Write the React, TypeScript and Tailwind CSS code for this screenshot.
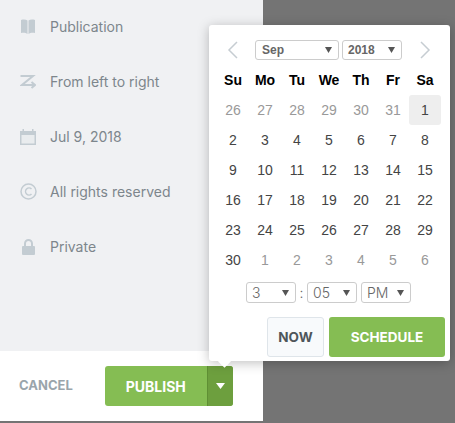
const weeks = [
  [26, 27, 28, 29, 30, 31, 1],
  [2, 3, 4, 5, 6, 7, 8],
  [9, 10, 11, 12, 13, 14, 15],
  [16, 17, 18, 19, 20, 21, 22],
  [23, 24, 25, 26, 27, 28, 29],
  [30, 1, 2, 3, 4, 5, 6],
];
const days = ["Su", "Mo", "Tu", "We", "Th", "Fr", "Sa"];

function Caret() {
  return (
    <svg width="7" height="6" viewBox="0 0 7 6" className="shrink-0">
      <path d="M0 0h7L3.500 6z" fill="#555" />
    </svg>
  );
}

function FakeSelect({ label, className }: { label: string; className: string }) {
  return (
    <div className={`flex items-center justify-between rounded-[3px] border border-[#ccc] bg-white pr-[6px] ${className}`}>
      <span>{label}</span>
      <Caret />
    </div>
  );
}

const rows = [
  {
    label: "Publication",
    icon: (
      <svg width="16" height="15" viewBox="0 0 16 15">
        <path d="M1 1c2.500-.8 5-.6 6.500.6V15C6 13.800 3.500 13.500 1 14zM15 1c-2.500-.8-5-.6-6.500.6V15c1.500-1.200 4-1.500 6.500-1z" fill="#c3ccd2" />
      </svg>
    ),
  },
  {
    label: "From left to right",
    icon: (
      <svg width="16" height="15" viewBox="0 0 16 15" fill="none" stroke="#c3ccd2" strokeWidth="2">
        <path d="M0.500 2h12.500L2 11h12.500M11.500 8l3.500 3-3.500 3" />
      </svg>
    ),
  },
  {
    label: "Jul 9, 2018",
    icon: (
      <svg width="16" height="16" viewBox="0 0 16 16">
        <path d="M0 2h2.500V0H4v2h8V0h1.500v2H16v14H0z" fill="#c3ccd2" />
        <rect x="1.500" y="6" width="13" height="8.500" fill="#e9ecee" />
      </svg>
    ),
  },
  {
    label: "All rights reserved",
    icon: (
      <svg width="17" height="17" viewBox="0 0 17 17" fill="none" stroke="#c3ccd2">
        <circle cx="8.500" cy="8.500" r="7.500" strokeWidth="1.500" />
        <path d="M11.500 6a3.500 3.500 0 1 0 0 5" strokeWidth="1.500" />
      </svg>
    ),
  },
  {
    label: "Private",
    icon: (
      <svg width="13" height="16" viewBox="0 0 13 16">
        <path d="M3 7V4.500a3.500 3.500 0 0 1 7 0V7" fill="none" stroke="#c3ccd2" strokeWidth="2" />
        <rect y="7" width="13" height="9" rx="1" fill="#c3ccd2" />
      </svg>
    ),
  },
];

export default function App() {
  return (
    <div className="relative h-[423px] w-[455px] overflow-hidden bg-[#747474] font-['Inter',sans-serif]">
      {/* Left panel */}
      <div className="flex h-[421px] w-[263px] flex-col bg-white">
        <div className="flex h-[351px] flex-col bg-[#f0f1f3]">
          {rows.map((row, i) => (
            <div key={row.label} className={`flex h-[55px] items-center text-[14px] text-[#7d868c] ${i === 0 ? "-mt-[1px]" : ""}`}>
              <div className="flex w-[50px] justify-center pl-[6px]">{row.icon}</div>
              <span>{row.label}</span>
            </div>
          ))}
        </div>
        <div className="flex flex-1 items-center pl-[19px]">
          <span className="text-[13px] font-bold text-[#9aa5ab]">CANCEL</span>
          <div className="ml-[32px] flex h-[40px] w-[128px] overflow-hidden rounded-[3px] bg-[#85bd53]">
            <div className="flex flex-1 items-center justify-center text-[14px] font-bold text-white">PUBLISH</div>
            <div className="flex w-[26px] items-center justify-center border-l border-[#5f8f34] bg-[#6d9f3e]">
              <svg width="9" height="6" viewBox="0 0 9 6">
                <path d="M0 0h9L4.500 6z" fill="#fff" />
              </svg>
            </div>
          </div>
        </div>
      </div>

      {/* Date picker popover */}
      <div className="absolute left-[209px] top-[25px] h-[336px] w-[241px] rounded-[3px] bg-white px-[7px] pt-[15px] font-['Liberation_Sans',sans-serif] shadow-[0_2px_12px_rgba(0,0,0,0.25)]">
        <div className="flex items-center">
          <svg width="12" height="18" viewBox="0 0 12 18" fill="none" stroke="#c6cdd2" strokeWidth="1.500" className="ml-[11px] mr-[16px]">
            <path d="M10 1 2 9l8 8" />
          </svg>
          <FakeSelect label="Sep" className="h-[20px] w-[84px] pl-[6px] text-[12px] font-bold text-[#666]" />
          <FakeSelect label="2018" className="ml-[3px] h-[20px] w-[60px] pl-[5px] text-[12px] font-bold text-[#666]" />
          <svg width="12" height="18" viewBox="0 0 12 18" fill="none" stroke="#c6cdd2" strokeWidth="1.500" className="ml-[17px]">
            <path d="M2 1l8 8-8 8" />
          </svg>
        </div>
        <div className="ml-[1px] mt-[9px] grid w-[224px] grid-cols-7 text-center text-[14px] font-bold text-black">
          {days.map((d) => (
            <div key={d} className="h-[26px] leading-[23px]">{d}</div>
          ))}
        </div>
        <div className="ml-[1px] grid w-[224px] grid-cols-7 text-center text-[14px]">
          {weeks.flatMap((week, w) =>
            week.map((n, i) => {
              const muted = (w === 0 && i < 6) || (w === 5 && i > 0);
              const selected = w === 0 && i === 6;
              return (
                <div
                  key={`${w}-${i}`}
                  className={`flex h-[30px] items-center justify-center rounded-[3px] ${muted ? "text-[#999]" : "text-[#444]"} ${selected ? "bg-[#eee]" : ""}`}
                >
                  {n}
                </div>
              );
            })
          )}
        </div>
        <div className="mt-[7px] flex items-center pl-[30px] font-['Inter',sans-serif] text-[14px] font-light text-[#666]">
          <FakeSelect label="3" className="h-[21px] w-[50px] pl-[5px]" />
          <span className="w-[11px] text-center">:</span>
          <FakeSelect label="05" className="h-[21px] w-[50px] pl-[5px]" />
          <FakeSelect label="PM" className="ml-[4px] h-[21px] w-[50px] pl-[5px]" />
        </div>
        <div className="mt-[14px] flex justify-end font-['Inter',sans-serif] text-[13.500px] font-bold">
          <div className="flex h-[40px] w-[57px] items-center justify-center rounded-[3px] border border-[#dfe5ea] bg-[#f8fafc] text-[#4e565b]">NOW</div>
          <div className="ml-[5px] mr-[-2px] flex h-[40px] w-[116px] items-center justify-center rounded-[3px] bg-[#85bd53] text-white">SCHEDULE</div>
        </div>
        {/* arrow */}
        <div className="absolute left-[11px] top-[332px] h-[9px] w-[9px] rotate-45 bg-white" />
      </div>
    </div>
  );
}
